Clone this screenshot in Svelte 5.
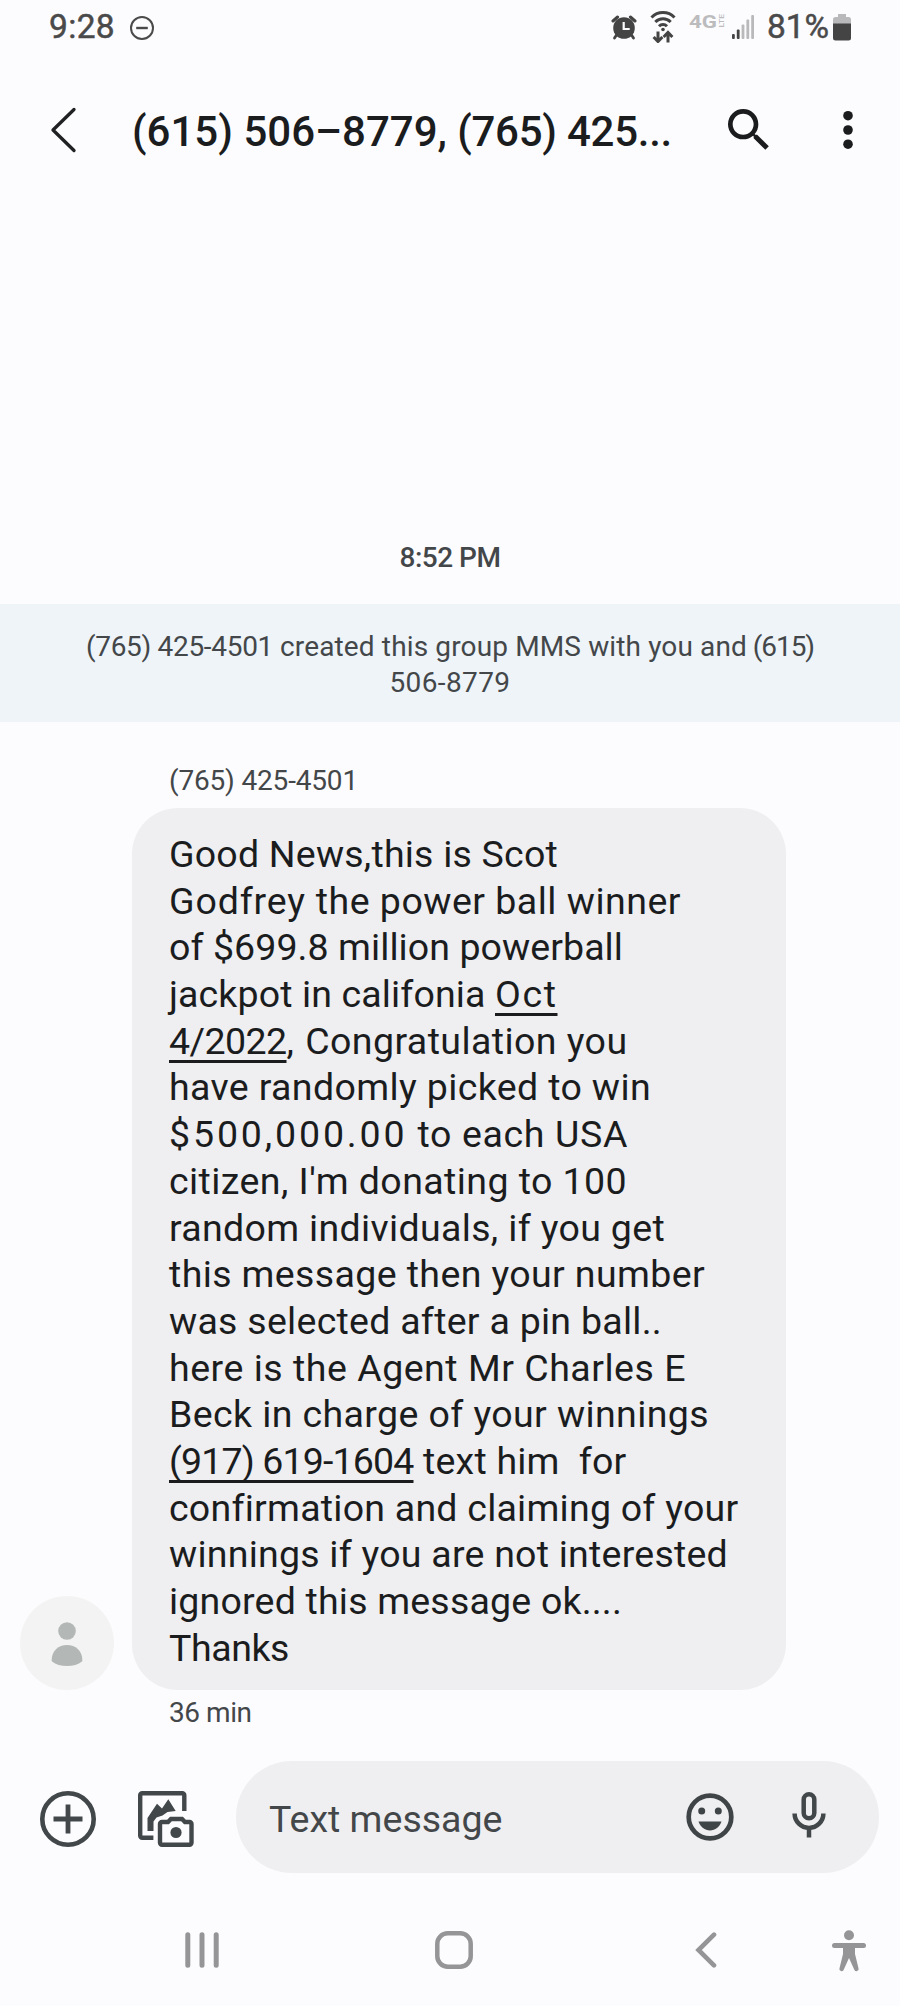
<script lang="ts">
	type Segment = { text: string; width: number; link?: boolean };

	const sender: string = '(765) 425-4501';

	// width is the measure of each run in px, letter spacing is worked out from it
	const title: Segment[] = [
		{ text: '(615) 506–8779,', width: 315 },
		{ text: ' (765) 425...', width: 225 }
	];
	const notice: Segment[][] = [
		[
			{ text: '(765) 425-4501', width: 187 },
			{ text: ' created this group MMS with you and', width: 474 },
			{ text: ' (615)', width: 67 }
		],
		[{ text: '506-8779', width: 121 }]
	];
	const lines: Segment[][] = [
		[{ text: 'Good News,this is Scot', width: 389 }],
		[
			{ text: 'Godfrey', width: 137 },
			{ text: ' the power ball winner', width: 375 }
		],
		[{ text: 'of $699.8 million powerball', width: 454 }],
		[
			{ text: 'jackpot in califonia ', width: 326 },
			{ text: 'Oct', width: 62.5, link: true }
		],
		[
			{ text: '4/2022', width: 117.5, link: true },
			{ text: ',', width: 9 },
			{ text: ' Congratulation you', width: 332 }
		],
		[{ text: 'have randomly picked to win', width: 482 }],
		[
			{ text: '$500,000.00', width: 238.5 },
			{ text: ' to each USA', width: 220.5 }
		],
		[{ text: "citizen, I'm donating to 100", width: 458 }],
		[{ text: 'random individuals, if you get', width: 496 }],
		[{ text: 'this message then your number', width: 536 }],
		[{ text: 'was selected after a pin ball..', width: 493 }],
		[{ text: 'here is the Agent Mr Charles E', width: 517 }],
		[{ text: 'Beck in charge of your winnings', width: 540 }],
		[
			{ text: '(917) 619-1604', width: 244.5, link: true },
			{ text: ' text him  for', width: 213 }
		],
		[{ text: 'confirmation and claiming of your', width: 568 }],
		[{ text: 'winnings if you are not interested', width: 559 }],
		[{ text: 'ignored this message ok....', width: 453 }],
		[{ text: 'Thanks', width: 120 }]
	];

	const signalBars = [
		{ x: 0, height: 5, on: true },
		{ x: 4.8, height: 9.5, on: true },
		{ x: 9.6, height: 14.5, on: false },
		{ x: 14.4, height: 19.5, on: false },
		{ x: 19.2, height: 24, on: false }
	];

	function fit(node: HTMLElement, width: number) {
		const natural = node.getBoundingClientRect().width;
		const count = node.textContent?.length ?? 1;
		node.style.letterSpacing = `${(width - natural) / count}px`;
	}
</script>

{#snippet run(segments: Segment[])}
	{#each segments as segment}<span class:link={segment.link} use:fit={segment.width}>{segment.text}</span>{/each}
{/snippet}

<div class="screen">
	<div class="status">
		<span class="clock" use:fit={66}>9:28</span>
		<svg class="dnd" width="26" height="26" viewBox="0 0 26 26">
			<circle cx="13" cy="13" r="11" fill="none" stroke="#4a4a4a" stroke-width="2" />
			<path d="M7.2 13h11.6" stroke="#4a4a4a" stroke-width="2.4" />
		</svg>
		<div class="status-right">
			<svg width="26" height="26" viewBox="0 0 26 26">
				<circle cx="13" cy="14" r="10.8" fill="#444" />
				<path d="M2 7 6.600 3M24 7 19.400 3" stroke="#444" stroke-width="3" stroke-linecap="round" />
				<path d="m5.500 21-2 3M20.500 21l2 3" stroke="#444" stroke-width="2.800" stroke-linecap="round" />
				<path d="M12.700 8v7h6" fill="none" stroke="#fcfcfe" stroke-width="2.200" />
			</svg>
			<svg class="wifi" width="26" height="32" viewBox="0 0 26 32">
				<g fill="none" stroke="#444" stroke-width="3">
					<path d="M1.5 6.5a16 16 0 0 1 23 0" />
					<path d="M5.3 11a10.800 10.800 0 0 1 15.400 0" />
					<path d="M9 15.200a5.600 5.600 0 0 1 8 0" />
				</g>
				<circle cx="13" cy="18.500" r="1.800" fill="#444" />
				<path d="M8 20.500v9.500M3.600 26 8 30.500l4.400-4.500M18 31.500V22.500M13.600 26 18 21.500l4.400 4.500" fill="none" stroke="#444" stroke-width="3" />
			</svg>
			<svg class="lte" width="38" height="16" viewBox="0 0 38 16">
				<text x="0" y="14.5" font-size="19" font-weight="700" textLength="28" lengthAdjust="spacingAndGlyphs">4G</text>
				<text transform="translate(35 14.5) rotate(-90)" font-size="8" font-weight="500" textLength="13.5" lengthAdjust="spacingAndGlyphs">LTE</text>
			</svg>
			<svg class="signal" width="22" height="24" viewBox="0 0 22 24">
				{#each signalBars as bar}
					<rect x={bar.x} y={24 - bar.height} width="2.8" height={bar.height} rx="1" fill={bar.on ? '#444' : '#b9b9bb'} />
				{/each}
			</svg>
			<span class="percent" use:fit={62}>81%</span>
			<svg class="battery" width="18" height="27" viewBox="0 0 18 27">
				<path d="M5 0h8v3h2.5a2.5 2.5 0 0 1 2.5 2.5V10H0V5.5A2.5 2.5 0 0 1 2.5 3H5z" fill="#b9b9bb" />
				<path d="M0 9.5h18V24a2.500 2.500 0 0 1-2.500 2.500h-13A2.500 2.500 0 0 1 0 24z" fill="#444" />
			</svg>
		</div>
	</div>

	<header>
		<svg class="back" width="28" height="46" viewBox="0 0 28 46">
			<path d="M24 2.5 3 23l21 20.500" fill="none" stroke="#1f2123" stroke-width="3.300" stroke-linecap="round" stroke-linejoin="round" />
		</svg>
		<h1>{@render run(title)}</h1>
		<svg class="search" width="56" height="56" viewBox="0 0 24 24" fill="#1b1c1e">
			<path d="M15.500 14h-.79l-.28-.27A6.471 6.471 0 0 0 16 9.500 6.500 6.500 0 1 0 9.500 16c1.610 0 3.090-.59 4.230-1.570l.27.28v.79l5 4.990L20.490 19l-4.990-5zm-6 0C7.010 14 5 11.990 5 9.500S7.010 5 9.500 5 14 7.010 14 9.500 11.990 14 9.500 14z" />
		</svg>
		<svg class="more" width="12" height="40" viewBox="0 0 12 40" fill="#1b1c1e">
			<circle cx="6" cy="5.700" r="4.800" />
			<circle cx="6" cy="20" r="4.800" />
			<circle cx="6" cy="34.200" r="4.800" />
		</svg>
	</header>

	<main>
		<p class="time"><span use:fit={101}>8:52 PM</span></p>
		<div class="notice">
			{#each notice as line}
				<div class="notice-line">{@render run(line)}</div>
			{/each}
		</div>

		<p class="sender"><span use:fit={189}>{sender}</span></p>
		<div class="message">
			<div class="avatar">
				<svg width="32" height="46" viewBox="0 0 32 46" fill="#b3b7b6">
					<circle cx="16" cy="11" r="8.800" />
					<path d="M.7 39.500C.7 31 7.500 25 16 25s15.300 6 15.300 14.500v1.700C27 44.500 22 46 16 46S5 44.500.7 41.200z" />
				</svg>
			</div>
			<div class="bubble">
				{#each lines as line}
					<div class="line">{@render run(line)}</div>
				{/each}
			</div>
		</div>
		<p class="age"><span use:fit={82.5}>36 min</span></p>
	</main>

	<div class="compose">
		<svg class="plus" width="56" height="56" viewBox="0 0 56 56" fill="none" stroke="#42474a">
			<circle cx="28" cy="28" r="25.700" stroke-width="4.600" />
			<path d="M28 13.500v29M13.500 28h29" stroke-width="4.800" />
		</svg>
		<svg class="gallery" width="56" height="56" viewBox="0 0 56 56" fill="none" stroke="#42474a" stroke-width="4.400">
			<path d="M46.300 20V4.200a2 2 0 0 0-2-2H4.200a2 2 0 0 0-2 2v40.600a2 2 0 0 0 2 2h11.200" />
			<path d="M9.500 40V27L19 12.700l5 4.800 6.300-9.200L37.700 20l-8.200 1-5 3.500-6 2-3 4V40z" fill="#42474a" stroke="none" />
			<path d="M24 31h6l3-3h11l3 3h4.500a2 2 0 0 1 2 2v18.800a2 2 0 0 1-2 2H24a2 2 0 0 1-2-2V33a2 2 0 0 1 2-2z" />
			<circle cx="38" cy="41.500" r="5.600" fill="#42474a" stroke="none" />
		</svg>
		<div class="field">
			<span class="placeholder" use:fit={234}>Text message</span>
			<svg class="emoji" width="48" height="48" viewBox="0 0 48 48">
				<circle cx="24" cy="24" r="21.300" fill="none" stroke="#3f4447" stroke-width="4.700" />
				<circle cx="15.700" cy="18" r="3.500" fill="#3f4447" />
				<circle cx="32.300" cy="18" r="3.500" fill="#3f4447" />
				<path d="M12.500 28.500h23C33.500 34 29.300 37.500 24 37.500S14.500 34 12.500 28.500z" fill="#3f4447" />
			</svg>
			<svg class="mic" width="34" height="46" viewBox="0 0 34 46" fill="none" stroke="#42474a" stroke-width="4.500">
				<rect x="11.700" y="2.300" width="10.600" height="24" rx="5.300" />
				<path d="M2.600 21.500a14.400 14.400 0 0 0 28.800 0M17 36v9.500" />
			</svg>
		</div>
	</div>

	<nav>
		<svg class="recents" width="34" height="36" viewBox="0 0 34 36" stroke="#959597" stroke-width="5" stroke-linecap="round">
			<path d="M2.800 2.800v30.400M17 2.800v30.400M31.200 2.800v30.400" />
		</svg>
		<svg class="home" width="38" height="38" viewBox="0 0 38 38">
			<rect x="2.300" y="2.300" width="33.400" height="33.400" rx="10.500" fill="none" stroke="#959597" stroke-width="4.500" />
		</svg>
		<svg class="nav-back" width="22" height="36" viewBox="0 0 22 36">
			<path d="M19 2.700 3.500 18 19 33.300" fill="none" stroke="#959597" stroke-width="4.600" stroke-linecap="round" stroke-linejoin="miter" />
		</svg>
		<svg class="access" width="34" height="42" viewBox="0 0 34 42">
			<circle cx="17" cy="5.300" r="5" fill="#959597" />
			<path d="M2.500 15.500h29" stroke="#959597" stroke-width="5" stroke-linecap="round" />
			<path d="M11 15h12v9l3.500 14.200a2.200 2.200 0 0 1-4.300 1.400L17 28l-5.200 11.600a2.200 2.200 0 0 1-4.300-1.400L11 24z" fill="#959597" />
		</svg>
	</nav>
</div>

<style>
	:global(body) {
		margin: 0;
		background: #fcfcfe;
	}
	.screen {
		width: 900px;
		height: 2006px;
		display: flex;
		flex-direction: column;
		background: #fcfcfe;
		font-family: Roboto, 'Liberation Sans', sans-serif;
		color: #44474a;
		overflow: hidden;
	}
	svg {
		display: block;
		flex: none;
	}
	span {
		white-space: pre;
	}
	p,
	h1 {
		margin: 0;
	}

	.status {
		display: flex;
		align-items: center;
		height: 54px;
		padding: 0 49px;
		box-sizing: border-box;
		font-size: 33.5px;
		line-height: 54px;
		color: #4a4a4a;
		-webkit-text-stroke: 0.5px #4a4a4a;
	}
	.dnd {
		margin: 2px 0 0 14px;
	}
	.status-right {
		display: flex;
		align-items: center;
		margin-left: auto;
	}
	.wifi {
		margin-left: 13px;
	}
	.lte {
		margin: 0 0 12px 13px;
		fill: #bcbcbe;
		overflow: visible;
		-webkit-text-stroke: 0;
	}
	.signal {
		margin-left: 5px;
	}
	.percent {
		margin-left: 13px;
	}
	.battery {
		margin-left: 4px;
	}

	header {
		display: flex;
		align-items: center;
		height: 152px;
		padding: 0 46px 0 50px;
	}
	h1 {
		margin: 4px 0 0 54px;
		width: 540px;
		font-size: 42px;
		line-height: 54px;
		font-weight: 500;
		white-space: nowrap;
		color: #1b1c1e;
	}
	.search {
		margin: -1px 0 0 49px;
	}
	.more {
		margin-left: auto;
	}

	main {
		margin-top: 334px;
		font-size: 28px;
		line-height: 36px;
	}
	.time {
		text-align: center;
		font-weight: 500;
	}
	.notice {
		margin-top: 28px;
		padding: 25px 0 21px;
		text-align: center;
		background: #eef4f8;
	}
	.notice-line {
		white-space: nowrap;
	}
	.sender {
		margin: 41px 0 9px 169px;
	}
	.message {
		display: flex;
		align-items: flex-end;
		gap: 18px;
		padding-left: 20px;
	}
	.avatar {
		display: flex;
		align-items: center;
		justify-content: center;
		width: 94px;
		height: 94px;
		border-radius: 50%;
		background: #f3f3f3;
	}
	.bubble {
		box-sizing: border-box;
		width: 654px;
		height: 882px;
		padding: 23px 37px 0;
		border-radius: 46px;
		background: #efeff1;
		color: #1b1c1e;
		font-size: 37.5px;
		line-height: 46.69px;
	}
	.line {
		height: 46.69px;
		white-space: nowrap;
	}
	.link {
		text-decoration: underline;
		text-decoration-thickness: 3px;
		text-underline-offset: 6px;
		text-decoration-skip-ink: none;
	}
	.age {
		margin: 5px 0 0 169px;
	}

	.compose {
		display: flex;
		align-items: center;
		height: 112px;
		margin-top: 30px;
		padding: 0 21px 0 40px;
	}
	.plus {
		margin-top: 3px;
	}
	.gallery {
		margin: 3px 0 0 42px;
	}
	.field {
		flex: 1;
		display: flex;
		align-items: center;
		height: 112px;
		margin-left: 42px;
		border-radius: 56px;
		background: #efeff1;
	}
	.placeholder {
		margin: 3px 0 0 33px;
		width: 234px;
		font-size: 37.5px;
	}
	.emoji {
		margin-left: 183px;
	}
	.mic {
		margin: -5px 0 0 58px;
	}

	nav {
		display: flex;
		align-items: center;
		height: 76px;
		margin-top: 39px;
		padding-left: 185px;
	}
	.home {
		margin-left: 216px;
	}
	.nav-back {
		margin-left: 222px;
	}
	.access {
		margin: 2px 0 0 115px;
	}
</style>
